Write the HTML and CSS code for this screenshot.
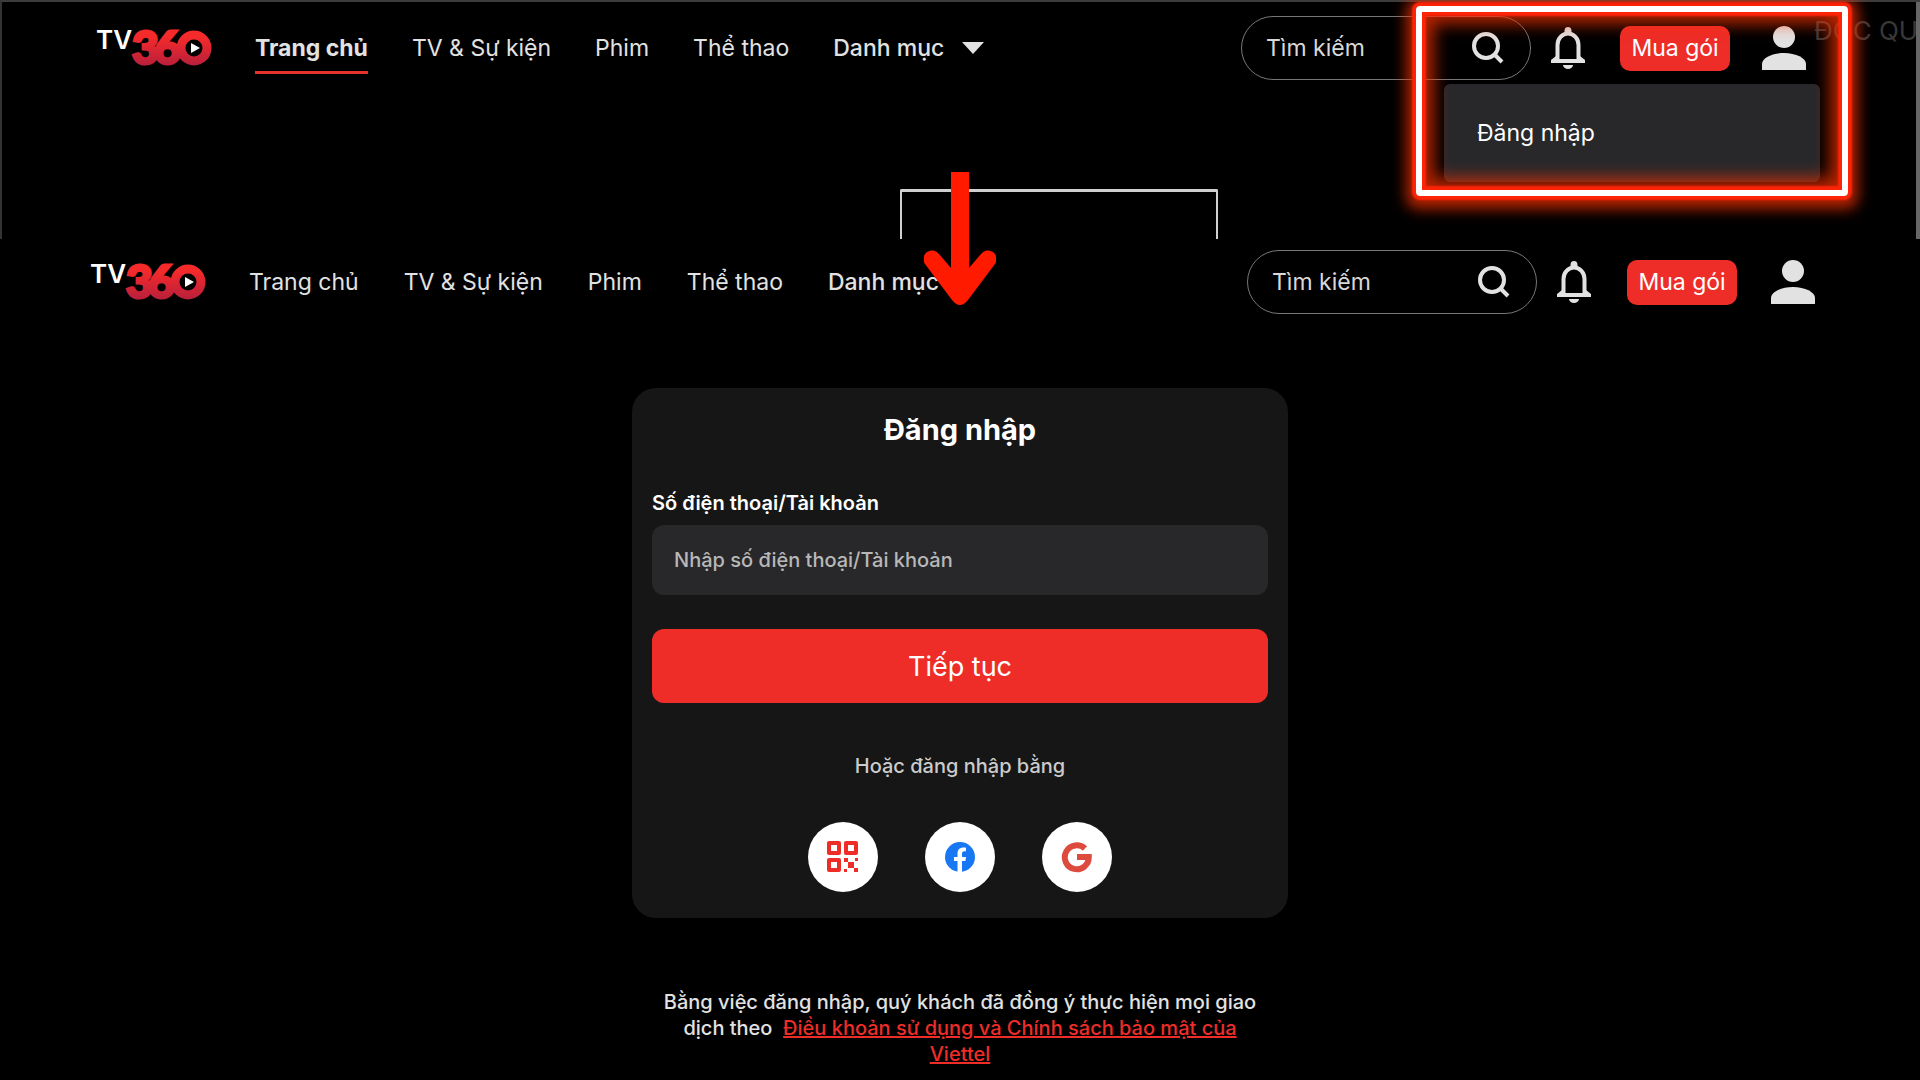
FILE: index.html
```html
<!DOCTYPE html>
<html lang="vi">
<head>
    <meta charset="UTF-8">
    <meta name="viewport" content="width=device-width, initial-scale=1.0">
    <title>TV360 - Đăng nhập</title>
    <link rel="stylesheet" href="styles.css">
</head>
<body>

    <!-- Shared icons -->
    <svg class="sprite" aria-hidden="true">
        <defs>
            <linearGradient id="logo-red" gradientUnits="userSpaceOnUse" x1="0" y1="0" x2="0" y2="36">
                <stop offset="0.2" stop-color="#f42a2b"/>
                <stop offset="1" stop-color="#b81f3c"/>
            </linearGradient>
        </defs>
        <symbol id="search" viewBox="0 0 32 32">
            <circle cx="14" cy="14" r="12" fill="none" stroke="currentColor" stroke-width="4"/>
            <path d="M22.500 22.500L30 30" stroke="currentColor" stroke-width="4"/>
        </symbol>
        <symbol id="bell" viewBox="0 0 34 42">
            <path d="M6.500 33V18a10.500 11.500 0 0 1 21 0v15" fill="none" stroke="currentColor" stroke-width="4"/>
            <path d="M13.500 6V4a3.500 4 0 0 1 7 0v2zM5 29h3v3h18v-3h3l5 4v3H0v-3zM12 38h10a5 4 0 0 1-10 0z" fill="currentColor"/>
        </symbol>
        <symbol id="user" viewBox="0 0 44 44">
            <circle cx="22" cy="11" r="11" fill="currentColor"/>
            <path d="M0 44V38C0 32 10 27 22 27s22 5 22 11v6z" fill="currentColor"/>
        </symbol>
    </svg>

    <!-- Step 1: home page -->
    <section class="home">
        <header class="topbar">
            <a class="logo" href="#" aria-label="TV360">
                <svg viewBox="0 0 116 36">
                    <text class="logo-tv" x="0" y="19">TV</text>
                    <text class="logo-num" x="36" y="34">3</text>
                    <text class="logo-num" x="58" y="34">6</text>
                    <circle cx="98" cy="18" r="13" fill="#000" stroke="url(#logo-red)" stroke-width="9"/>
                    <path d="M95 13v10l9-5z" fill="#fff"/>
                </svg>
            </a>
            <nav class="menu">
                <a class="active" href="#">Trang chủ</a>
                <a href="#">TV &amp; Sự kiện</a>
                <a href="#">Phim</a>
                <a href="#">Thể thao</a>
                <a class="category" href="#">Danh mục <span class="caret"></span></a>
            </nav>
            <div class="actions">
                <form class="search">
                    <input type="text" placeholder="Tìm kiếm" aria-label="Tìm kiếm">
                    <button type="button" aria-label="Tìm"><svg><use href="#search"/></svg></button>
                </form>
                <button class="bell" type="button" aria-label="Thông báo"><svg><use href="#bell"/></svg></button>
                <button class="buy" type="button">Mua gói</button>
                <button class="user" type="button" aria-label="Tài khoản"><svg><use href="#user"/></svg></button>
            </div>
        </header>
        <div class="exclusive">ĐỘC QUY</div>
        <div class="bracket"></div>
        <div class="dropdown"><a href="#">Đăng nhập</a></div>
        <div class="highlight"></div>
        <div class="scrollbar"></div>
        <svg class="arrow" viewBox="0 0 72 134">
            <path d="M27 0h18v96l12-14a8.500 8.500 0 0 1 14 10L44 128q-8 10-16 0L1 92A8.500 8.500 0 0 1 15 82l12 14z" fill="#ff1a00"/>
        </svg>
    </section>

    <!-- Step 2: login page -->
    <section class="login">
        <header class="topbar">
            <a class="logo" href="#" aria-label="TV360">
                <svg viewBox="0 0 116 36">
                    <text class="logo-tv" x="0" y="19">TV</text>
                    <text class="logo-num" x="36" y="34">3</text>
                    <text class="logo-num" x="58" y="34">6</text>
                    <circle cx="98" cy="18" r="13" fill="#000" stroke="url(#logo-red)" stroke-width="9"/>
                    <path d="M95 13v10l9-5z" fill="#fff"/>
                </svg>
            </a>
            <nav class="menu">
                <a href="#">Trang chủ</a>
                <a href="#">TV &amp; Sự kiện</a>
                <a href="#">Phim</a>
                <a href="#">Thể thao</a>
                <a class="category" href="#">Danh mục</a>
            </nav>
            <div class="actions">
                <form class="search">
                    <input type="text" placeholder="Tìm kiếm" aria-label="Tìm kiếm">
                    <button type="button" aria-label="Tìm"><svg><use href="#search"/></svg></button>
                </form>
                <button class="bell" type="button" aria-label="Thông báo"><svg><use href="#bell"/></svg></button>
                <button class="buy" type="button">Mua gói</button>
                <button class="user" type="button" aria-label="Tài khoản"><svg><use href="#user"/></svg></button>
            </div>
        </header>

        <main>
            <form class="card">
                <h1>Đăng nhập</h1>
                <label for="account">Số điện thoại/Tài khoản</label>
                <input class="account" id="account" type="text" placeholder="Nhập số điện thoại/Tài khoản">
                <button class="submit" type="button">Tiếp tục</button>
                <p class="or">Hoặc đăng nhập bằng</p>
                <div class="socials">
                    <button type="button" aria-label="Mã QR">
                        <svg viewBox="0 0 32 32" fill="#ee2d28">
                            <path fill-rule="evenodd" d="M2 0h10a2 2 0 0 1 2 2v10a2 2 0 0 1-2 2H2a2 2 0 0 1-2-2V2a2 2 0 0 1 2-2zM4 4v6h6V4z"/>
                            <path fill-rule="evenodd" d="M19 0h10a2 2 0 0 1 2 2v10a2 2 0 0 1-2 2H19a2 2 0 0 1-2-2V2a2 2 0 0 1 2-2zM21 4v6h6V4z"/>
                            <path fill-rule="evenodd" d="M2 17h10a2 2 0 0 1 2 2v10a2 2 0 0 1-2 2H2a2 2 0 0 1-2-2V19a2 2 0 0 1 2-2zM4 21v6h6v-6z"/>
                            <path d="M17 17h4v4h-4zM28 17h3v3h-3zM21 21h6v6h-6zM17 28h3v3h-3zM27 27h4v4h-4z"/>
                        </svg>
                    </button>
                    <button type="button" aria-label="Facebook">
                        <svg viewBox="0 0 32 32">
                            <circle cx="16" cy="16" r="15" fill="#1877f2"/>
                            <path d="M13.500 32V20H10v-4h3.500v-3.500C13.500 8.500 16 6.500 19.500 6.500c1.200 0 2.500.2 2.500.2v3.500h-1.500c-2 0-2.500 1-2.500 2.300V16h4l-.6 4H18v12z" fill="#fff"/>
                        </svg>
                    </button>
                    <button type="button" aria-label="Google">
                        <svg viewBox="0 0 32 32" fill="none" stroke="#dc4b3e" stroke-width="6">
                            <path d="M24 7.500A12 12 0 1 0 27.800 16H16"/>
                        </svg>
                    </button>
                </div>
            </form>
            <p class="terms">Bằng việc đăng nhập, quý khách đã đồng ý thực hiện mọi giao dịch theo&nbsp; <a href="#">Điều khoản sử dụng và Chính sách bảo mật của Viettel</a></p>
        </main>
    </section>

</body>
</html>
```
FILE: styles.css
```css
* {
    box-sizing: border-box;
}

body {
    margin: 0;
    background-color: #000;
    color: #e2e2e2;
    font-family: Inter, "Noto Sans", sans-serif;
    font-size: 23px;
}

a {
    color: inherit;
    text-decoration: none;
}

button,
input {
    font: inherit;
    color: inherit;
    background: none;
    border: 0;
    padding: 0;
    margin: 0;
}

button {
    cursor: pointer;
}

svg {
    display: block;
}

.sprite {
    position: absolute;
    width: 0;
    height: 0;
}

/* Home page part */
.home {
    position: relative;
    height: 239px;
    border-top: 2px solid #3c3c3c;
    border-left: 2px solid #333;
}

.topbar {
    display: flex;
    align-items: center;
}

.home .topbar {
    padding: 14px 114px 0 94px;
}

.login .topbar {
    padding: 11px 105px 0 90px;
}

/* Logo */
.logo svg {
    width: 116px;
    height: 36px;
    overflow: visible;
}

.logo-tv {
    font-size: 26px;
    font-weight: 600;
    fill: #fff;
}

.logo-num {
    font-family: Lato, sans-serif;
    font-size: 46px;
    font-weight: 900;
    fill: url(#logo-red);
    stroke: url(#logo-red);
    stroke-width: 3px;
}

/* Menu */
.menu {
    display: flex;
    gap: 44px;
    margin-left: 43px;
    line-height: 32px;
    white-space: nowrap;
}

.login .menu {
    gap: 45px;
}

.menu .active {
    position: relative;
    font-weight: 700;
}

.menu .active::after {
    content: "";
    position: absolute;
    left: 0;
    right: 0;
    bottom: -10px;
    height: 3px;
    background-color: #e5322d;
}

.category {
    display: flex;
    align-items: center;
    gap: 18px;
    font-weight: 500;
}

.caret {
    border: 11px solid transparent;
    border-top: 12px solid #e2e2e2;
    border-bottom: 0;
}

/* Right side of the top bar */
.actions {
    display: flex;
    align-items: center;
    margin-left: auto;
}

.search {
    display: flex;
    align-items: center;
    width: 290px;
    height: 64px;
    padding: 0 26px 0 24px;
    border: 1px solid #777;
    border-radius: 32px;
}

.search input {
    flex: 1;
    min-width: 0;
}

.search input::placeholder {
    color: #d8d8d8;
    opacity: 1;
}

.search svg {
    width: 32px;
    height: 32px;
}

.bell {
    margin: 0 35px 0 20px;
}

.bell svg {
    width: 34px;
    height: 42px;
}

.buy {
    width: 110px;
    height: 45px;
    margin-right: 32px;
    border-radius: 10px;
    background-color: #ee2d28;
    color: #fff;
    white-space: nowrap;
}

.login .bell {
    margin-right: 36px;
}

.login .buy {
    margin-right: 34px;
}

.user svg {
    width: 44px;
    height: 44px;
}

/* Things lying over the home page */
.exclusive {
    position: absolute;
    top: 13px;
    right: 4px;
    width: 102px;
    overflow: hidden;
    color: #383838;
    font-size: 26px;
    line-height: 32px;
    white-space: nowrap;
}

.bracket {
    position: absolute;
    left: 50%;
    bottom: 0;
    width: 318px;
    height: 50px;
    margin-left: -61px;
    border: 2px solid #d0d0d0;
    border-top-width: 3px;
    border-bottom: 0;
    border-radius: 2px 2px 0 0;
}

.dropdown {
    position: absolute;
    top: 82px;
    right: 100px;
    width: 376px;
    height: 98px;
    padding: 33px;
    border-radius: 6px;
    background-color: #28282b;
    color: #fff;
    line-height: 32px;
}

.highlight {
    position: absolute;
    top: 4px;
    right: 72px;
    width: 432px;
    height: 190px;
    border: 6px solid #fff;
    border-radius: 4px;
    box-shadow: 0 0 2px 4px #ff2408, 0 3px 14px 10px rgba(255, 50, 0, 0.7),
        inset 0 0 2px 4px #ff2408, inset 0 0 16px 12px rgba(255, 50, 0, 0.7);
}

.scrollbar {
    position: absolute;
    top: 0;
    right: 0;
    bottom: 0;
    width: 4px;
    background-color: #666;
}

.arrow {
    position: absolute;
    top: 170px;
    left: 50%;
    width: 72px;
    height: 134px;
    margin-left: -37px;
    z-index: 1;
}

/* Login card */
main {
    display: flex;
    flex-direction: column;
    align-items: center;
    padding-top: 74px;
}

.card {
    display: flex;
    flex-direction: column;
    width: 100%;
    max-width: 656px;
    padding: 20px 20px 26px;
    border-radius: 24px;
    background-color: #161616;
}

.card h1 {
    margin: 0;
    color: #fff;
    font-size: 29px;
    line-height: 44px;
    text-align: center;
}

.card label {
    margin: 37px 0 8px;
    color: #fff;
    font-size: 20px;
    font-weight: 600;
    line-height: 28px;
}

.account {
    height: 70px;
    padding: 0 22px;
    border-radius: 12px;
    background-color: #28282b;
    font-size: 20px;
    font-weight: 500;
}

.account::placeholder {
    color: #b8b8b8;
    opacity: 1;
}

.submit {
    height: 74px;
    margin-top: 34px;
    border-radius: 12px;
    background-color: #ee2d28;
    color: #fff;
    font-size: 27px;
}

.or {
    margin: 49px 0 42px;
    color: #ccc;
    font-size: 20px;
    font-weight: 500;
    line-height: 28px;
    text-align: center;
}

.socials {
    display: flex;
    justify-content: center;
    gap: 47px;
}

.socials button {
    display: flex;
    align-items: center;
    justify-content: center;
    width: 70px;
    height: 70px;
    border-radius: 50%;
    background-color: #fff;
}

.socials svg {
    width: 32px;
    height: 32px;
}

.terms {
    max-width: 610px;
    margin: 71px 0 0;
    font-size: 20px;
    font-weight: 500;
    line-height: 26px;
    text-align: center;
}

.terms a {
    color: #ee2d28;
    text-decoration: underline;
}
```
